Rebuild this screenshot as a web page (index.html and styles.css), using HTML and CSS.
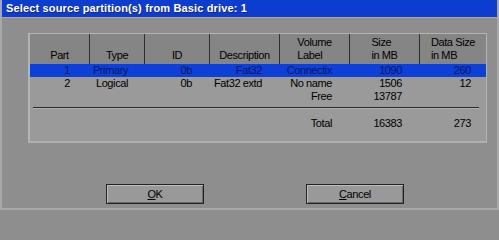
FILE: index.html
```html
<!DOCTYPE html>
<html>
<head>
<meta charset="utf-8">
<link rel="stylesheet" href="styles.css">
</head>
<body>
<div class="window">
  <div class="titlebar">Select source partition(s) from Basic drive: 1</div>
  <div class="content">
    <div class="panel">
      <div class="grid head">
        <div class="hc"><span>Part</span></div>
        <div class="hc"><span>Type</span></div>
        <div class="hc"><span>ID</span></div>
        <div class="hc"><span>Description</span></div>
        <div class="hc"><span>Volume<br>Label</span></div>
        <div class="hc"><span>Size<br>in MB</span></div>
        <div class="hc last"><span>Data Size<br>in MB</span></div>
      </div>
      <div class="grid row sel">
        <div>1</div><div>Primary</div><div>0b</div><div>Fat32</div><div>Connectix</div><div>1090</div><div>260</div>
      </div>
      <div class="grid row">
        <div>2</div><div>Logical</div><div>0b</div><div>Fat32 extd</div><div>No name</div><div>1506</div><div>12</div>
      </div>
      <div class="grid row">
        <div></div><div></div><div></div><div></div><div>Free</div><div>13787</div><div></div>
      </div>
      <div class="sep"></div>
      <div class="grid row total">
        <div></div><div></div><div></div><div></div><div>Total</div><div>16383</div><div>273</div>
      </div>
    </div>
    <div class="buttons">
      <button class="btn"><u>O</u>K</button>
      <button class="btn"><u>C</u>ancel</button>
    </div>
  </div>
</div>
</body>
</html>
```
FILE: styles.css
```css
html, body {
  margin: 0;
  padding: 0;
  background: #8e8e8e;
}
.window {
  width: 499px;
  height: 210px;
  box-sizing: border-box;
  border-left: 2px solid #a8a8a8;
  border-right: 2px solid #a8a8a8;
  border-bottom: 2px solid #a8a8a8;
  background: #8e8e8e;
  font-family: "Liberation Sans", Arial, sans-serif;
  font-size: 11px;
  letter-spacing: -0.4px;
  color: #000;
  overflow: hidden;
}
.titlebar {
  height: 17px;
  margin-left: -2px;
  margin-right: -2px;
  background: #0c3cd0;
  color: #fff;
  font-weight: bold;
  font-size: 11px;
  letter-spacing: 0.15px;
  line-height: 17px;
  padding-left: 6px;
  border-bottom: 1px solid #a8a8a8;
  text-shadow: 1px 1px 0 #1a2a70;
}
.content {
  padding: 15px 0 0 26px;
}
.panel {
  width: 459px;
  height: 110px;
  box-sizing: border-box;
  background: #9a9a9a;
  border-top: 1px solid #b4b4b4;
  border-left: 2px solid #b4b4b4;
  border-right: 1px solid #b4b4b4;
  border-bottom: 2px solid #b0b0b0;
}
.grid {
  display: grid;
  grid-template-columns: 60px 55px 65px 70px 70px 70px 66px;
}
.head {
  height: 30px;
  background: #858585;
}
.hc {
  display: flex;
  flex-direction: column;
  justify-content: flex-end;
  align-items: center;
  border-right: 1px solid #2e2e2e;
  line-height: 13px;
  padding-bottom: 2px;
  box-sizing: border-box;
}
.hc span {
  text-align: left;
}
.hc.last {
  border-right: none;
}
.row {
  height: 13px;
  line-height: 13px;
}
.row > div {
  text-align: right;
  padding-right: 18px;
  white-space: nowrap;
}
.row > div:first-child {
  padding-right: 20px;
}
.row > div:nth-child(2) {
  padding-right: 17px;
}
.row > div:last-child {
  padding-right: 15px;
}
.sel {
  background: #0c40d8;
  color: #0a1760;
}
.sep {
  margin: 4px 7px 0 3px;
  height: 1px;
  background: #2a2a2a;
  border-bottom: 1px solid #b0b0b0;
}
.total {
  margin-top: 8px;
}
.buttons {
  display: flex;
  gap: 102px;
  padding: 41px 0 0 78px;
}
.btn {
  width: 98px;
  height: 20px;
  box-sizing: border-box;
  background: #999;
  border: 1px solid #222;
  box-shadow: inset 1px 1px 0 #bdbdbd, inset -1px -1px 0 #6a6a6a;
  font-family: inherit;
  font-size: 11px;
  letter-spacing: -0.4px;
  color: #000;
  padding: 0;
  margin: 0;
}
```
